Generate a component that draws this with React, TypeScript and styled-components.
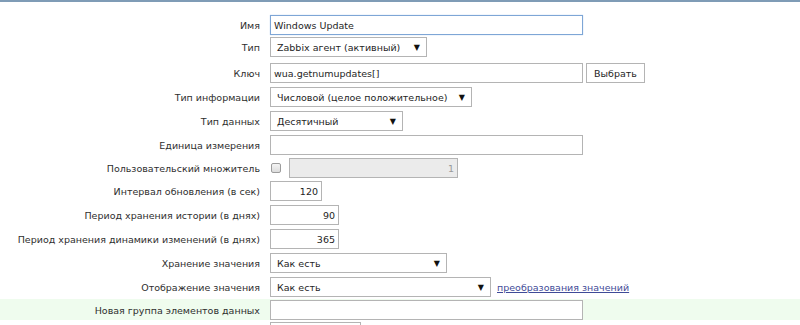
import { createGlobalStyle, styled } from "styled-components";

const GlobalStyle = createGlobalStyle`
  html, body {
    margin: 0;
    padding: 0;
    background: #ffffff;
  }
  body {
    font-family: "DejaVu Sans", Verdana, sans-serif;
    font-size: 9.5px;
    color: #2b2b2b;
  }
`;

const Page = styled.div`
  width: 800px;
  height: 325px;
  overflow: hidden;
  border-top: 2px solid #7f9cb6;
  box-sizing: border-box;
  padding-top: 11px;
`;

const Row = styled.div<{ $hl?: boolean; $pad?: string }>`
  display: grid;
  grid-template-columns: 260px 1fr;
  column-gap: 10px;
  align-items: center;
  padding: ${(p) => p.$pad || "2px 0"};
  background: ${(p) => (p.$hl ? "#effcee" : "transparent")};
`;

const Label = styled.div`
  text-align: right;
  color: #2e2e2e;
  white-space: nowrap;
`;

const Field = styled.div`
  display: flex;
  align-items: center;
  gap: 3px;
`;

const TextInput = styled.div<{ $w: number; $right?: boolean; $focus?: boolean; $disabled?: boolean }>`
  width: ${(p) => p.$w}px;
  height: 20px;
  box-sizing: border-box;
  border: 1px solid ${(p) => (p.$focus ? "#7ea6d6" : "#b4b4b4")};
  box-shadow: ${(p) => (p.$focus ? "0 0 1px #a9c6ea" : "none")};
  background: ${(p) => (p.$disabled ? "#ebebeb" : "#ffffff")};
  color: ${(p) => (p.$disabled ? "#9a9a9a" : "#1e1e1e")};
  padding: 0 3px;
  display: flex;
  align-items: center;
  justify-content: ${(p) => (p.$right ? "flex-end" : "flex-start")};
  white-space: nowrap;
`;

const Select = styled.div<{ $w: number }>`
  width: ${(p) => p.$w}px;
  height: 20px;
  box-sizing: border-box;
  border: 1px solid #b4b4b4;
  background: #ffffff;
  color: #1e1e1e;
  padding: 0 6px 0 6px;
  display: flex;
  align-items: center;
  justify-content: space-between;
  white-space: nowrap;
`;

const Arrow = styled.span`
  font-size: 8px;
  color: #111;
  margin-left: 4px;
`;

const Button = styled.div`
  height: 20px;
  box-sizing: border-box;
  border: 1px solid #b4b4b4;
  background: #ffffff;
  padding: 0 7px;
  display: flex;
  align-items: center;
  color: #1e1e1e;
`;

const Check = styled.span`
  width: 10px;
  height: 10px;
  box-sizing: border-box;
  border: 1px solid #9c9c9c;
  border-radius: 2px;
  background: linear-gradient(#f4f4f4, #dcdcdc);
  margin: 0 5px 0 1px;
`;

const Link = styled.a`
  color: #3f4b97;
  text-decoration: underline;
  margin-left: 3px;
`;

type SelectProps = { w: number; value: string };
const Dropdown = ({ w, value }: SelectProps) => (
  <Select $w={w}>
    <span>{value}</span>
    <Arrow>▼</Arrow>
  </Select>
);

const App = () => {
  return (
    <>
      <GlobalStyle />
      <Page>
        <Row>
          <Label>Имя</Label>
          <Field>
            <TextInput $w={313} $focus>Windows Update</TextInput>
          </Field>
        </Row>
        <Row $pad="0 0 4px">
          <Label>Тип</Label>
          <Field>
            <Dropdown w={157} value="Zabbix агент (активный)" />
          </Field>
        </Row>
        <Row>
          <Label>Ключ</Label>
          <Field>
            <TextInput $w={313}>wua.getnumupdates[]</TextInput>
            <Button>Выбрать</Button>
          </Field>
        </Row>
        <Row>
          <Label>Тип информации</Label>
          <Field>
            <Dropdown w={202} value="Числовой (целое положительное)" />
          </Field>
        </Row>
        <Row>
          <Label>Тип данных</Label>
          <Field>
            <Dropdown w={133} value="Десятичный" />
          </Field>
        </Row>
        <Row>
          <Label>Единица измерения</Label>
          <Field>
            <TextInput $w={313} />
          </Field>
        </Row>
        <Row $pad="1px 0">
          <Label>Пользовательский множитель</Label>
          <Field>
            <Check />
            <TextInput $w={169} $right $disabled>
              1
            </TextInput>
          </Field>
        </Row>
        <Row>
          <Label>Интервал обновления (в сек)</Label>
          <Field>
            <TextInput $w={52} $right>
              120
            </TextInput>
          </Field>
        </Row>
        <Row>
          <Label>Период хранения истории (в днях)</Label>
          <Field>
            <TextInput $w={69} $right>
              90
            </TextInput>
          </Field>
        </Row>
        <Row>
          <Label>Период хранения динамики изменений (в днях)</Label>
          <Field>
            <TextInput $w={69} $right>
              365
            </TextInput>
          </Field>
        </Row>
        <Row>
          <Label>Хранение значения</Label>
          <Field>
            <Dropdown w={177} value="Как есть" />
          </Field>
        </Row>
        <Row>
          <Label>Отображение значения</Label>
          <Field>
            <Dropdown w={221} value="Как есть" />
            <Link href="#">преобразования значений</Link>
          </Field>
        </Row>
        <Row $hl $pad="1px 0 0">
          <Label>Новая группа элементов данных</Label>
          <Field>
            <TextInput $w={313} />
          </Field>
        </Row>
        <Row>
          <Label />
          <Field>
            <TextInput $w={91} />
          </Field>
        </Row>
      </Page>
    </>
  );
};

export default App;
